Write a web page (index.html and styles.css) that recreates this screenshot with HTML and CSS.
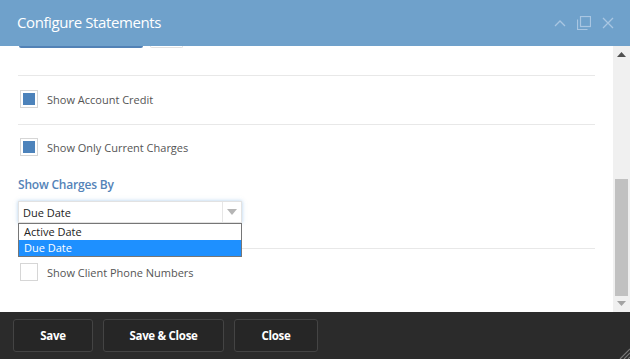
FILE: index.html
```html
<!DOCTYPE html>
<html>
<head>
<meta charset="utf-8">
<link rel="stylesheet" href="styles.css">
</head>
<body>
<div class="dialog">
  <header class="titlebar">
    <span class="title">Configure Statements</span>
    <div class="win-icons">
      <svg class="ico" width="12" height="8" viewBox="0 0 12 8"><path d="M1 7 L6 2 L11 7" fill="none" stroke="#a9c6e2" stroke-width="1.3"/></svg>
      <svg class="ico" width="14" height="14" viewBox="0 0 14 14"><rect x="3.5" y="0.5" width="10" height="10" fill="none" stroke="#a9c6e2" stroke-width="1.2"/><path d="M0.5 3.5 V13.5 H10.5" fill="none" stroke="#a9c6e2" stroke-width="1.2"/></svg>
      <svg class="ico" width="12" height="12" viewBox="0 0 12 12"><path d="M1 1 L11 11 M11 1 L1 11" fill="none" stroke="#a9c6e2" stroke-width="1.3"/></svg>
    </div>
  </header>
  <div class="pane">
    <div class="content">
      <div class="top-btns">
        <div class="btn-blue"></div>
        <div class="btn-light"></div>
      </div>
      <div class="sep sep-first"></div>
      <div class="row">
        <span class="cb checked"></span><span class="lbl">Show Account Credit</span>
      </div>
      <div class="sep"></div>
      <div class="row row-tight">
        <span class="cb checked"></span><span class="lbl">Show Only Current Charges</span>
      </div>
      <div class="section-label">Show Charges By</div>
      <div class="select-wrap">
        <div class="select">
          <span class="sel-text">Due Date</span>
          <span class="sel-arrow"><svg width="10" height="6" viewBox="0 0 10 6"><path d="M0 0 H10 L5 6 Z" fill="#b5b5b5"/></svg></span>
        </div>
        <ul class="dropdown">
          <li>Active Date</li>
          <li class="active">Due Date</li>
        </ul>
      </div>
      <div class="sep sep-low"></div>
      <div class="row">
        <span class="cb"></span><span class="lbl">Show Client Phone Numbers</span>
      </div>
    </div>
    <div class="scrollbar">
      <svg class="arr" width="9" height="5" viewBox="0 0 9 5"><path d="M0 5 H9 L4.5 0 Z" fill="#505050"/></svg>
      <div class="track"><div class="thumb"></div></div>
      <svg class="arr" width="9" height="5" viewBox="0 0 9 5"><path d="M0 0 H9 L4.5 5 Z" fill="#a3a3a3"/></svg>
    </div>
  </div>
  <footer class="footer">
    <button class="fbtn w-save">Save</button>
    <button class="fbtn w-saveclose">Save &amp; Close</button>
    <button class="fbtn w-close">Close</button>
    <svg class="grip" width="11" height="11" viewBox="0 0 11 11"><path d="M11 1 L1 11 M11 5 L5 11 M11 9 L9 11" stroke="#777" stroke-width="1.2"/></svg>
  </footer>
</div>
</body>
</html>
```
FILE: styles.css
```css
* { box-sizing: border-box; }
html, body { margin: 0; padding: 0; }
body {
  width: 630px;
  height: 359px;
  overflow: hidden;
  font-family: "Open Sans", "Noto Sans", sans-serif;
  background: #fff;
}
.dialog {
  display: flex;
  flex-direction: column;
  height: 359px;
}
.titlebar {
  height: 46px;
  flex: none;
  background: #6fa1cb;
  display: flex;
  align-items: center;
  padding: 0 16px 0 17px;
}
.title {
  color: #fff;
  font-size: 15px;
  letter-spacing: -0.4px;
  flex: 1;
  margin-top: -2px;
}
.win-icons {
  display: flex;
  align-items: center;
  gap: 11px;
}
.ico { display: block; }
.pane {
  flex: 1;
  display: flex;
  overflow: hidden;
}
.content {
  flex: 1;
  padding: 0 18px 0 18px;
  overflow: hidden;
}
.top-btns {
  display: flex;
  gap: 7px;
  height: 2px;
  margin-left: 1px;
  overflow: visible;
}
.btn-blue {
  width: 124px;
  height: 2px;
  background: #5282b6;
  border-radius: 0 0 3px 3px;
}
.btn-light {
  width: 33px;
  height: 2px;
  border: 1px solid #e2e2e2;
  border-top: none;
  border-radius: 0 0 3px 3px;
}
.sep {
  height: 1px;
  background: #e8e8e8;
  margin-top: 16px;
}
.sep-first { margin-top: 27px; }
.row {
  display: flex;
  align-items: center;
  height: 18px;
  margin: 14px 0 0 2px;
}
.row-tight { margin-top: 13px; }
.cb {
  width: 18px;
  height: 18px;
  border: 1px solid #d6d6d6;
  background: #fff;
  position: relative;
  flex: none;
}
.cb.checked::after {
  content: "";
  position: absolute;
  left: 2px;
  top: 2px;
  width: 12px;
  height: 12px;
  background: #4d83bb;
}
.lbl {
  margin-left: 9px;
  font-size: 11px;
  color: #555;
}
.section-label {
  margin-top: 20px;
  font-size: 12px;
  font-weight: 600;
  color: #5483b8;
  letter-spacing: -0.2px;
  height: 16px;
}
.select-wrap {
  position: relative;
  margin-top: 9px;
  width: 224px;
}
.select {
  height: 22px;
  border: 1px solid #e2e2e2;
  box-shadow: 0 0 4px rgba(110, 165, 220, 0.55);
  display: flex;
  align-items: center;
  background: #fff;
}
.sel-text {
  flex: 1;
  font-size: 11px;
  color: #222;
  padding-left: 4px;
}
.sel-arrow {
  width: 19px;
  height: 100%;
  border-left: 1px solid #e6e6e6;
  display: flex;
  align-items: center;
  justify-content: center;
}
.sel-arrow svg { display: block; }
.dropdown {
  position: absolute;
  left: 0;
  top: 22px;
  width: 224px;
  margin: 0;
  padding: 0;
  list-style: none;
  border: 1px solid #767676;
  background: #fff;
  font-size: 11px;
  z-index: 5;
}
.dropdown li {
  height: 16px;
  line-height: 16px;
  padding-left: 5px;
  color: #222;
}
.dropdown li.active {
  background: #1e90ff;
  color: #fff;
}
.sep-low { margin-top: 25px; }
.scrollbar {
  width: 17px;
  flex: none;
  background: #f0f0f0;
  display: flex;
  flex-direction: column;
  align-items: center;
  padding: 6px 0 6px;
}
.arr { display: block; flex: none; }
.track {
  flex: 1;
  width: 100%;
  display: flex;
  flex-direction: column;
  justify-content: flex-end;
  padding: 0 2px 5px;
}
.thumb {
  height: 117px;
  background: #c1c1c1;
}
.footer {
  height: 47px;
  flex: none;
  background: #2b2b2b;
  display: flex;
  align-items: center;
  gap: 10px;
  padding: 0 13px;
  position: relative;
}
.fbtn {
  height: 33px;
  background: #262626;
  border: 1px solid #444;
  border-radius: 3px;
  color: #fff;
  font-family: "Open Sans", "Noto Sans", sans-serif;
  font-size: 11.5px;
  font-weight: 700;
  letter-spacing: -0.3px;
  padding: 0;
}
.w-save { width: 80px; }
.w-saveclose { width: 121px; }
.w-close { width: 84px; }
.grip {
  position: absolute;
  right: 0;
  bottom: 0;
}
```
